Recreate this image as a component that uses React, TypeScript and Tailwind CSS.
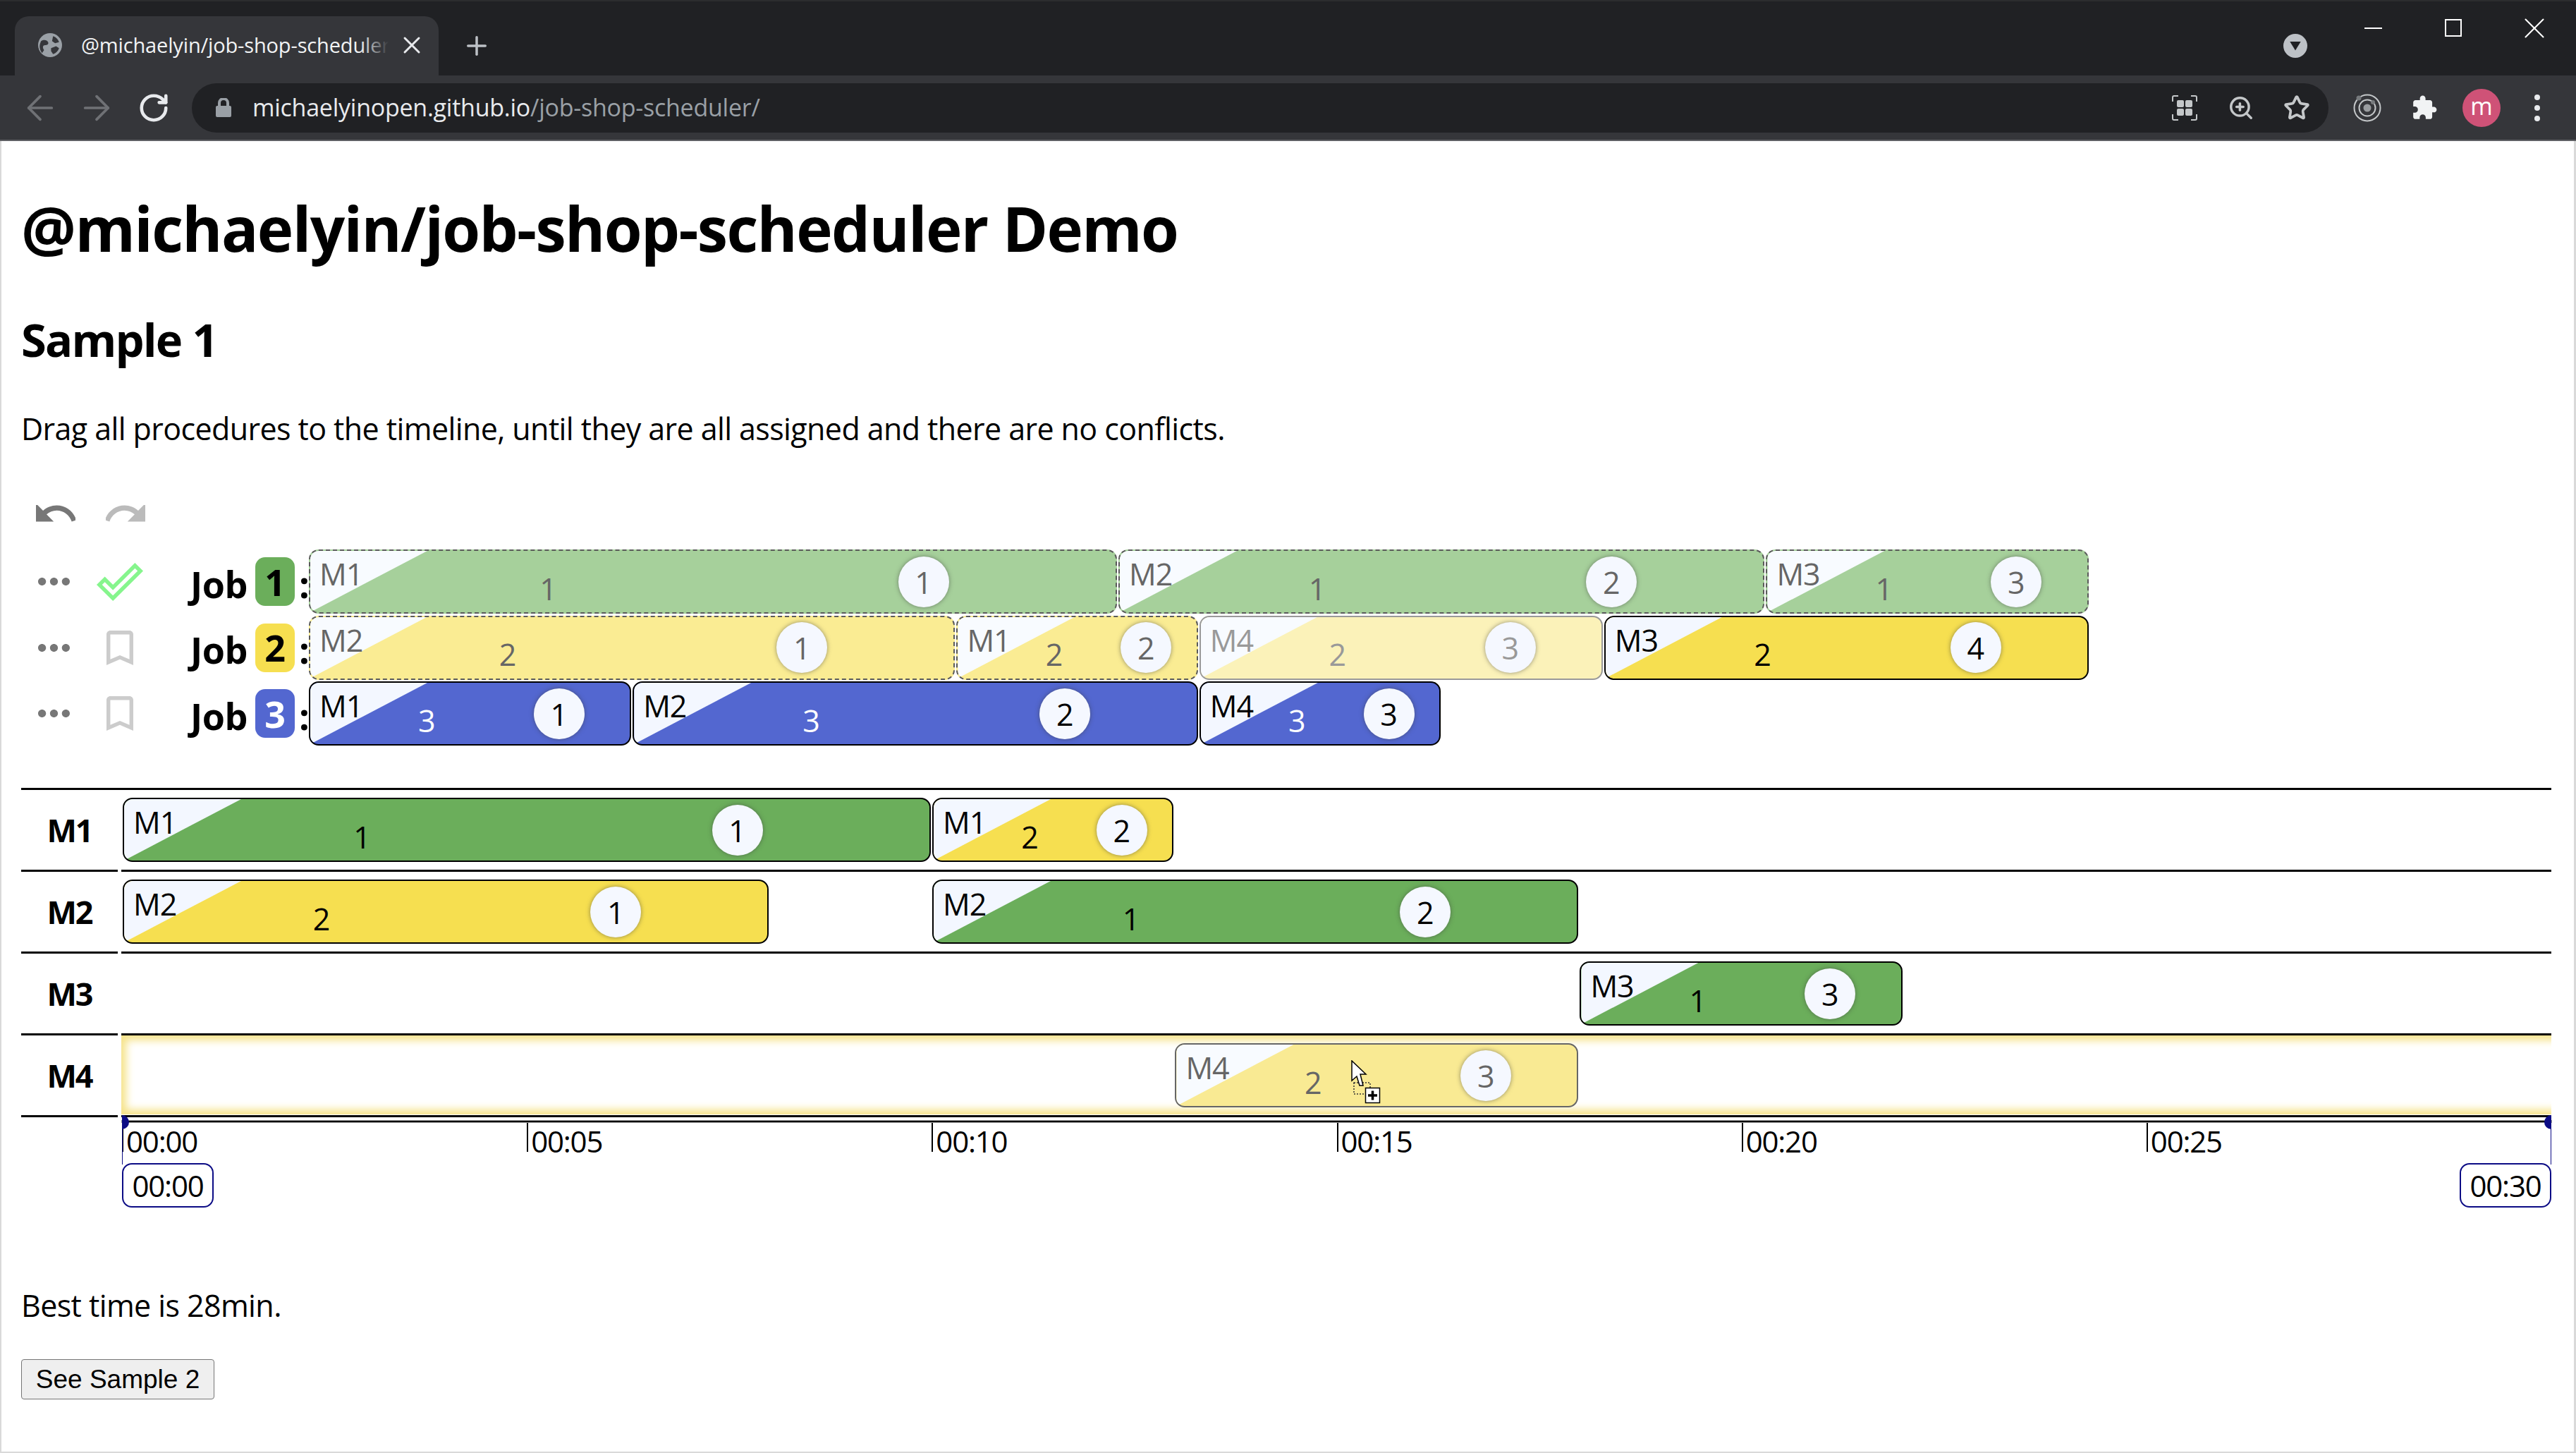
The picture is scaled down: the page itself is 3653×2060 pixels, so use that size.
import type { ReactNode } from "react";
import { ArrowLeft, ArrowRight, Plus, RotateCw, Star, X, ZoomIn } from "lucide-react";

const MIN = 114.8;
const UI = { fontFamily: '"Open Sans", sans-serif' };

type Tone = "green" | "yellow" | "blue";
type State = "placed" | "done" | "ghost" | "drag";

interface Proc {
  machine: string;
  job: number;
  seq: number;
  mins: number;
  state?: State;
  gap?: number;
}

const toneBg: Record<Tone, string> = {
  green: "bg-[#6bae5b]",
  yellow: "bg-[#f6df50]",
  blue: "bg-[#5367d0]",
};

const tones: Tone[] = ["green", "yellow", "blue"];

const jobs: { id: number; done: boolean; procs: Proc[] }[] = [
  {
    id: 1,
    done: true,
    procs: [
      { machine: "M1", job: 1, seq: 1, mins: 10, state: "done" },
      { machine: "M2", job: 1, seq: 2, mins: 8, state: "done" },
      { machine: "M3", job: 1, seq: 3, mins: 4, state: "done" },
    ],
  },
  {
    id: 2,
    done: false,
    procs: [
      { machine: "M2", job: 2, seq: 1, mins: 8, state: "done" },
      { machine: "M1", job: 2, seq: 2, mins: 3, state: "done" },
      { machine: "M4", job: 2, seq: 3, mins: 5, state: "ghost" },
      { machine: "M3", job: 2, seq: 4, mins: 6 },
    ],
  },
  {
    id: 3,
    done: false,
    procs: [
      { machine: "M1", job: 3, seq: 1, mins: 4 },
      { machine: "M2", job: 3, seq: 2, mins: 7 },
      { machine: "M4", job: 3, seq: 3, mins: 3 },
    ],
  },
];

const machines: { name: string; over?: boolean; procs: Proc[] }[] = [
  {
    name: "M1",
    procs: [
      { machine: "M1", job: 1, seq: 1, mins: 10 },
      { machine: "M1", job: 2, seq: 2, mins: 3 },
    ],
  },
  {
    name: "M2",
    procs: [
      { machine: "M2", job: 2, seq: 1, mins: 8 },
      { machine: "M2", job: 1, seq: 2, mins: 8, gap: 2 },
    ],
  },
  { name: "M3", procs: [{ machine: "M3", job: 1, seq: 3, mins: 4, gap: 18 }] },
  { name: "M4", over: true, procs: [{ machine: "M4", job: 2, seq: 3, mins: 5, gap: 13, state: "drag" }] },
];

function Procedure({ p }: { p: Proc }) {
  const state = p.state ?? "placed";
  const tone = tones[p.job - 1];
  const frame =
    state === "done"
      ? "border-dashed border-[#5a5a5a]"
      : state === "ghost"
        ? "border-[#999]"
        : state === "drag"
          ? "border-[#666]"
          : "border-black";
  const ink = state === "done" || state === "drag" ? "text-[#666]" : state === "ghost" ? "text-[#999]" : "text-black";
  const fill =
    state === "ghost"
      ? "bg-[#fbf2b9]"
      : state === "drag"
        ? "bg-[#f9ea93]"
        : state === "done"
          ? tone === "green"
            ? "bg-[#a6d09b]"
            : "bg-[#faec93]"
          : toneBg[tone];
  const corner = state === "placed" ? "bg-[#f3f7ff]" : "bg-[#f8fbff]";

  return (
    <div
      className={`relative box-border h-[91px] shrink-0 overflow-hidden rounded-[14px] border-2 ${frame} ${fill}`}
      style={{ width: p.mins * MIN - 2, marginLeft: (p.gap ?? 0) * MIN + 2 }}
    >
      <div className={`absolute top-0 left-0 h-full w-[166px] [clip-path:polygon(0_0,100%_0,0_100%)] ${corner}`} />
      <span className={`absolute top-[4px] left-[13px] text-[43px] leading-[58px] tracking-[-1px] ${ink}`}>{p.machine}</span>
      <div className="relative grid h-full grid-cols-2">
        <div
          className={`flex items-center justify-center pt-[21px] pl-[102px] text-[43px] tracking-[-2px] ${
            tone === "blue" && state === "placed" ? "text-white" : ink
          }`}
        >
          {p.job}
        </div>
        <div className="flex items-center justify-center pl-[26px]">
          <div
            className={`flex h-[72px] w-[72px] items-center justify-center rounded-full bg-[#f5f8ff] pt-[3px] text-[43px] shadow-[0_0_6px_rgba(60,60,60,0.55)] ${ink}`}
          >
            {p.seq}
          </div>
        </div>
      </div>
    </div>
  );
}

function Glyph({ box, d, className }: { box: string; d: string; className: string }) {
  return (
    <svg viewBox={box} preserveAspectRatio="none" className={`shrink-0 fill-current ${className}`}>
      <path d={d} />
    </svg>
  );
}

function JobRow({ id, done, procs }: { id: number; done: boolean; procs: Proc[] }) {
  const badge = id === 3 ? "text-white" : "text-black";
  return (
    <div className="flex h-[91px] items-center">
      <Glyph
        box="4 10 16 4"
        className="ml-[26px] h-[11px] w-[45px] text-[#777]"
        d="M6 10c-1.1 0-2 .9-2 2s.9 2 2 2 2-.9 2-2-.9-2-2-2zm12 0c-1.1 0-2 .9-2 2s.9 2 2 2 2-.9 2-2-.9-2-2-2zm-6 0c-1.1 0-2 .9-2 2s.9 2 2 2 2-.9 2-2-.9-2-2-2z"
      />
      <div className="ml-[38px] flex w-[66px] justify-center">
        {done ? (
          <Glyph
            box="0 2.1 24 19.8"
            className="h-[54px] w-[66px] text-[#86f58d]"
            d="M19.77 4.93l1.4 1.4L8.43 19.07l-5.6-5.6 1.4-1.4 4.2 4.2L19.77 4.93m0-2.83L8.43 13.44l-4.2-4.2L0 13.47l8.43 8.43L24 6.33 19.77 2.1z"
          />
        ) : (
          <Glyph
            box="5 3 14 18"
            className="h-[49px] w-[38px] text-[#ccc]"
            d="M17 3H7c-1.1 0-1.99.9-1.99 2L5 21l7-3 7 3V5c0-1.1-.9-2-2-2zm0 15l-5-2.18L7 18V5h10v13z"
          />
        )}
      </div>
      <span className="ml-[67px] w-[92px] pt-[6px] text-[52px] font-bold tracking-[-0.5px] text-black">Job</span>
      <span
        className={`flex h-[69px] w-[56px] items-center justify-center rounded-[14px] text-[52px] font-bold ${toneBg[tones[id - 1]]} ${badge}`}
      >
        {id}
      </span>
      <span className="ml-[6px] w-[12px] pt-[6px] text-[52px] leading-none font-bold">:</span>
      {procs.map((p) => (
        <Procedure key={p.machine} p={p} />
      ))}
    </div>
  );
}

function Chrome() {
  return (
    <>
      <div className="flex h-[107px] items-end border-t-2 border-[#2b2c2e] bg-[#202124] pl-[21px]">
        <div className="flex h-[84px] w-[601px] items-center rounded-t-[20px] bg-[#35363a] pb-[2px]">
          <svg viewBox="0 0 24 24" className="ml-[33px] h-[34px] w-[34px] shrink-0">
            <circle cx="12" cy="12" r="12" fill="#9aa0a6" />
            <path d="M3 8c3-2 6-1 7 1s-1 3-3 3-3 2-1 5l-2 3c-3-4-3-8-1-12zM15 3c3 1 5 3 6 6l-4 1-3-2zM13 15l5-2 3 2c-1 3-3 5-6 6l-2-3z" fill="#35363a" />
          </svg>
          <span className="relative ml-[27px] w-[436px] overflow-hidden text-[29px] tracking-[-0.15px] whitespace-nowrap text-[#f1f3f4]">
            @michaelyin/job-shop-scheduler
            <span className="absolute top-0 right-0 h-full w-[40px] bg-gradient-to-r from-transparent to-[#35363a]" />
          </span>
          <X className="ml-[13px] h-[40px] w-[40px] text-[#e8eaed]" strokeWidth={1.8} />
        </div>
        <div className="flex h-[84px] items-center pl-[33px]">
          <Plus className="h-[42px] w-[42px] text-[#bdc1c6]" strokeWidth={2} />
        </div>
        <div className="ml-auto flex h-full">
          <div className="flex h-[84px] items-center self-end">
            <div className="flex h-[34px] w-[34px] items-center justify-center rounded-full bg-[#bdc1c6]">
              <div className="h-[13px] w-[16px] bg-[#202124] [clip-path:polygon(0_0,100%_0,50%_100%)]" />
            </div>
          </div>
          <div className="ml-[81px] flex h-[50px] items-start pt-[25px]">
            <div className="mt-[12px] h-[2px] w-[25px] bg-white" />
            <div className="ml-[89px] h-[25px] w-[24px] border-2 border-white" />
            <X className="mr-[34px] ml-[78px] h-[50px] w-[50px] -translate-y-[12px] text-white" strokeWidth={1} />
          </div>
        </div>
      </div>
      <div className="flex h-[93px] items-center border-b-2 border-[#5f6064] bg-[#35363a]">
        <ArrowLeft className="ml-[29px] h-[56px] w-[56px] text-[#6f7175]" strokeWidth={1.6} />
        <ArrowRight className="ml-[24px] h-[56px] w-[56px] text-[#6f7175]" strokeWidth={1.6} />
        <RotateCw className="ml-[30px] h-[46px] w-[46px] text-[#e8eaed]" strokeWidth={2.4} />
        <div className="ml-[31px] flex h-[70px] w-[3030px] items-center rounded-full bg-[#202124]">
          <svg viewBox="0 0 22 27" className="ml-[34px] h-[27px] w-[22px] fill-[#9aa0a6]">
            <path d="M3 11V7a8 8 0 0 1 16 0v4h1a2 2 0 0 1 2 2v12a2 2 0 0 1-2 2H2a2 2 0 0 1-2-2V13a2 2 0 0 1 2-2zM7 11h8V7a4 4 0 0 0-8 0z" />
          </svg>
          <span className="ml-[30px] text-[34px] tracking-[-0.25px] whitespace-nowrap text-[#e8eaed]">
            michaelyinopen.github.io<span className="text-[#9aa0a6]">/job-shop-scheduler/</span>
          </span>
          <div className="ml-auto flex items-center text-[#c4c7c9]">
            <svg viewBox="0 0 36 36" className="h-[36px] w-[36px]" fill="none" stroke="currentColor" strokeWidth="2">
              <path d="M1 9V3a2 2 0 0 1 2-2h6M27 1h6a2 2 0 0 1 2 2v6M35 27v6a2 2 0 0 1-2 2h-6M9 35H3a2 2 0 0 1-2-2v-6" />
              <g fill="currentColor" stroke="none">
                <rect x="7" y="7" width="10" height="10" rx="2" />
                <rect x="19" y="7" width="10" height="10" rx="2" />
                <rect x="7" y="19" width="10" height="10" rx="2" />
                <rect x="19" y="19" width="10" height="10" rx="2" />
              </g>
            </svg>
            <ZoomIn className="ml-[43px] h-[38px] w-[38px]" strokeWidth={2.2} />
            <Star className="mr-[26px] ml-[41px] h-[38px] w-[38px]" strokeWidth={2.4} />
          </div>
        </div>
        <svg viewBox="0 0 40 40" className="ml-[35px] h-[40px] w-[40px]" fill="none" stroke="#c4c7c9" strokeWidth="2">
          <circle cx="20" cy="20" r="18.5" />
          <circle cx="20" cy="20" r="11.5" />
          <circle cx="20" cy="20" r="5.5" fill="#9a9da0" stroke="none" />
          <circle cx="8" cy="6" r="3.5" fill="#777a7d" stroke="none" />
          <circle cx="28" cy="12" r="3" fill="#777a7d" stroke="none" />
        </svg>
        <svg viewBox="0 0 24 24" className="ml-[42px] h-[38px] w-[38px] fill-[#f1f3f4]">
          <path d="M20.5 11H19V7c0-1.1-.9-2-2-2h-4V3.500C13 2.120 11.880 1 10.500 1S8 2.120 8 3.500V5H4c-1.100 0-1.990.9-1.990 2v3.800H3.500c1.490 0 2.700 1.210 2.700 2.700s-1.210 2.700-2.700 2.700H2V20c0 1.100.9 2 2 2h3.800v-1.500c0-1.490 1.210-2.700 2.700-2.700 1.490 0 2.700 1.210 2.700 2.700V22H17c1.100 0 2-.9 2-2v-4h1.500c1.380 0 2.500-1.120 2.500-2.500S21.880 11 20.500 11z" />
        </svg>
        <div className="ml-[35px] flex h-[54px] w-[54px] items-center justify-center rounded-full bg-[#cf5277] pb-[4px] text-[34px] text-white">m</div>
        <div className="ml-[48px] flex flex-col gap-[7px]">
          <div className="h-[8px] w-[8px] rounded-full bg-[#e8eaed]" />
          <div className="h-[8px] w-[8px] rounded-full bg-[#e8eaed]" />
          <div className="h-[8px] w-[8px] rounded-full bg-[#e8eaed]" />
        </div>
      </div>
    </>
  );
}

function Track({ children, over }: { children: ReactNode; over?: boolean }) {
  return (
    <div className="relative flex h-[113px] flex-1 items-center overflow-hidden">
      {over && (
        <div className="absolute top-0 bottom-px left-0 -right-[40px] shadow-[inset_0_0_12px_7px_#f6e38a]" />
      )}
      {children}
    </div>
  );
}

function Axis() {
  const ticks = ["00:00", "00:05", "00:10", "00:15", "00:20", "00:25"];
  return (
    <div className="relative ml-[143px] h-[140px] w-[3445px]">
      <div className="absolute top-[5px] right-0 left-0 h-[2px] bg-black shadow-[0_0_0_1px_#999]" />
      <div className="grid grid-cols-6 pt-[7px]">
        {ticks.map((t) => (
          <div key={t} className="h-[42px] border-l-2 border-black pl-[4px] text-[42px] leading-[54px] tracking-[-1.2px]">
            {t}
          </div>
        ))}
      </div>
      <div className="absolute -top-[3px] left-0 h-[20px] w-[10px] rounded-r-full bg-[#0c0c85]" />
      <div className="absolute -top-[3px] right-0 h-[20px] w-[10px] rounded-l-full bg-[#0c0c85]" />
      <div className="absolute top-0 left-0 h-[67px] w-px bg-[#0c0c85]" />
      <div className="absolute top-0 right-0 h-[67px] w-px bg-[#0c0c85]" />
      <div className="absolute top-[65px] left-0 flex h-[63px] w-[130px] items-center justify-center rounded-[14px] border-2 border-[#0c0c85] bg-white text-[42px] tracking-[-1.2px]">
        00:00
      </div>
      <div className="absolute top-[65px] right-0 flex h-[63px] w-[130px] items-center justify-center rounded-[14px] border-2 border-[#0c0c85] bg-white text-[42px] tracking-[-1.2px]">
        00:30
      </div>
    </div>
  );
}

export default function App() {
  return (
    <div className="h-[2060px] w-[3653px] overflow-hidden bg-white text-black" style={UI}>
      <Chrome />
      <main className="relative h-[1860px] border-r-[3px] border-b-2 border-l-2 border-[#d9d9d9] pl-[28px]">
        <h1 className="pt-[64px] text-[87px] leading-[118px] font-bold tracking-[-1.6px]">@michaelyin/job-shop-scheduler Demo</h1>
        <h2 className="mt-[56px] text-[65px] leading-[86px] font-bold tracking-[-1.8px]">Sample 1</h2>
        <p className="mt-[53px] text-[43px] leading-[62px] tracking-[-0.6px]">
          Drag all procedures to the timeline, until they are all assigned and there are no conflicts.
        </p>

        <div className="mt-[77px] flex gap-[43px] pl-[21px]">
          <Glyph
            box="2 7.800 20 8.700"
            className="h-[25px] w-[56px] text-[#777]"
            d="M12.500 8c-2.650 0-5.050.99-6.900 2.600L2 7v9h9l-3.620-3.620c1.390-1.160 3.160-1.880 5.120-1.880 3.540 0 6.550 2.310 7.600 5.500l2.370-.78C21.080 11.030 17.150 8 12.500 8z"
          />
          <Glyph
            box="2 7.800 20 8.700"
            className="h-[25px] w-[56px] text-[#bbb]"
            d="M18.400 10.600C16.550 8.990 14.150 8 11.500 8c-4.650 0-8.580 3.030-9.960 7.220L3.900 16c1.050-3.190 4.050-5.500 7.600-5.500 1.950 0 3.730.72 5.120 1.880L13 16h9V7l-3.600 3.600z"
          />
        </div>

        <div className="mt-[38px] -ml-[2px] flex flex-col gap-[2.5px]">
          {jobs.map((j) => (
            <JobRow key={j.id} id={j.id} done={j.done} procs={j.procs} />
          ))}
        </div>

        <div className="mt-[60px] mr-[32px] border-t-[3px] border-black">
          {machines.map((m) => (
            <div key={m.name} className="flex">
              <div className="flex h-[116px] w-[137px] shrink-0 items-center justify-center border-b-[3px] border-black text-[45px] font-bold tracking-[-2px]">
                {m.name}
              </div>
              <div className="ml-[5px] flex min-w-0 flex-1 flex-col border-b-[3px] border-black">
                <Track over={m.over}>
                  {m.procs.map((p) => (
                    <Procedure key={p.job + p.machine} p={p} />
                  ))}
                </Track>
              </div>
            </div>
          ))}
        </div>

        <Axis />

        <p className="mt-[96px] text-[43px] leading-[62px] tracking-[-0.6px]">Best time is 28min.</p>
        <button
          type="button"
          className="mt-[45px] h-[57px] w-[274px] rounded-[4px] border-[1.5px] border-[#767676] bg-[#efefef] text-[37px] text-black"
          style={{ fontFamily: '"Liberation Sans", sans-serif' }}
        >
          See Sample 2
        </button>

        <svg viewBox="0 0 42 62" className="absolute top-[1303px] left-[1914px] h-[62px] w-[42px]">
          <path d="M4 32h23v16H4z" fill="none" stroke="#333" strokeWidth="1.5" strokeDasharray="2 2" />
          <path d="M1 1v28l7-6 4 13h5l-4-16h8z" fill="#fff" stroke="#000" strokeWidth="1.5" />
          <rect x="20.5" y="39.5" width="20" height="21" fill="#fff" stroke="#000" strokeWidth="1.5" />
          <path d="M30.500 43.500v13M24 50h13" stroke="#000" strokeWidth="3.500" />
        </svg>
      </main>
    </div>
  );
}
